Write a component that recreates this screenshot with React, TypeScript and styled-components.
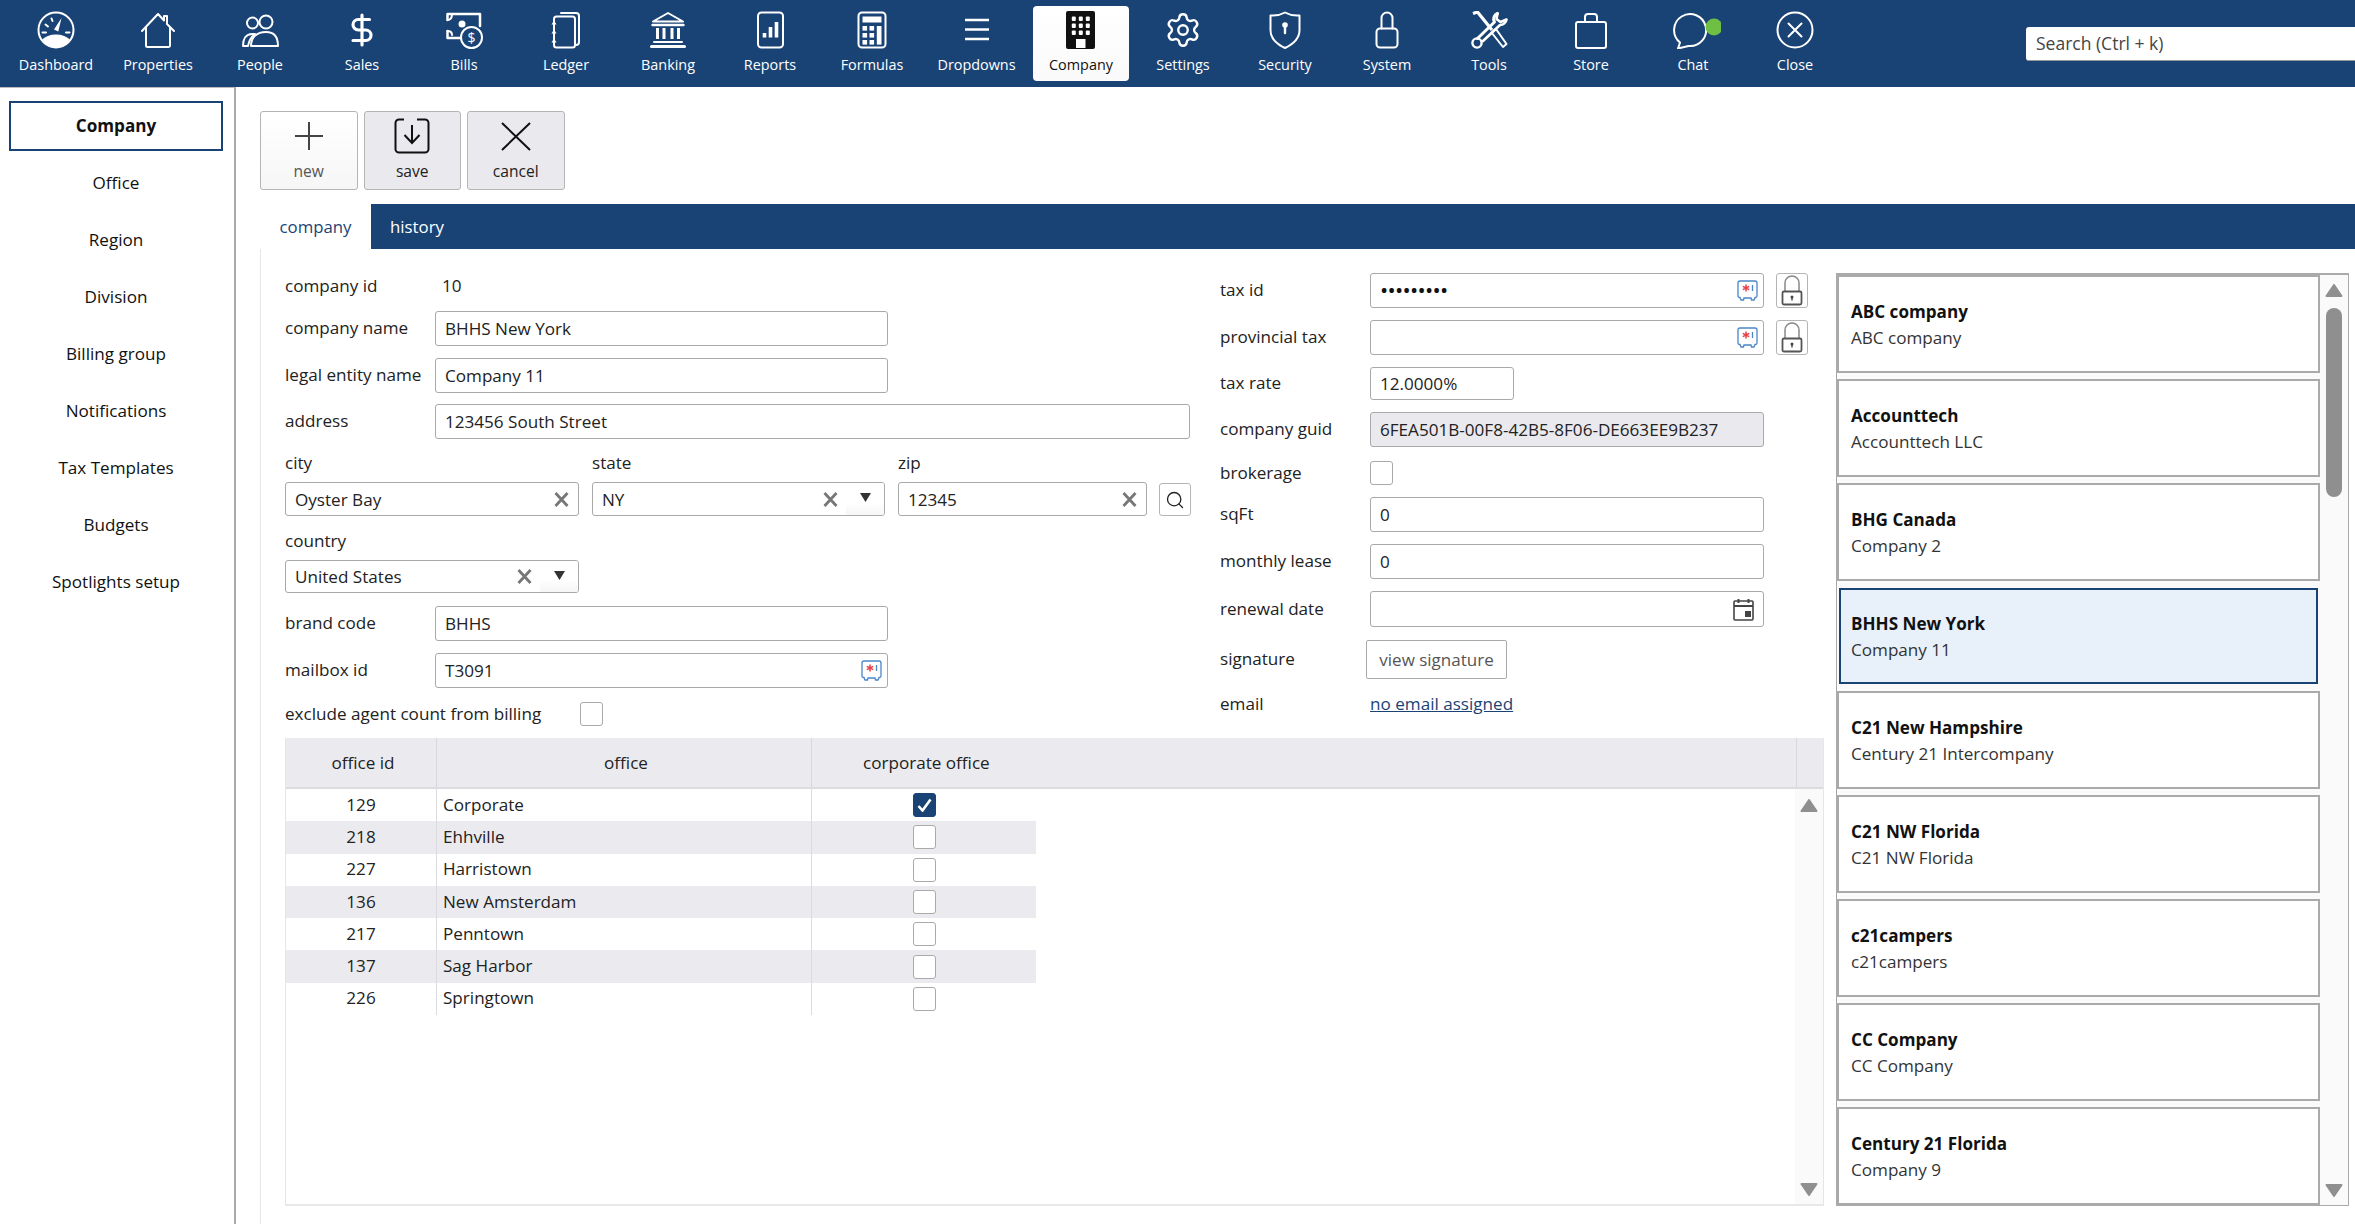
import React from "react";
import styled, { createGlobalStyle } from "styled-components";
import { DollarSign, Settings as Gear, Search as SearchGlyph } from "lucide-react";

const NAVY = "#1a4375";
const FONT = `"Open Sans", "Noto Sans", "Liberation Sans", sans-serif`;
const TEXT = "17.1px";

const Global = createGlobalStyle`
  html, body { margin: 0; padding: 0; width: 2355px; height: 1224px; overflow: hidden; background: #fff; }
  body { font-family: ${FONT}; font-size: ${TEXT}; color: #222; }
  * { box-sizing: border-box; }
`;

const Page = styled.div`display: flex; flex-direction: column; width: 2355px; height: 1224px; overflow: hidden;`;

/* ---------- top bar ---------- */
const TopBar = styled.header`display: flex; align-items: flex-start; flex: none; height: 87px; padding-left: 5px; background: ${NAVY};`;
const NavItem = styled.div<{ $active?: boolean; $wide?: boolean }>`
  display: flex; flex-direction: column; align-items: center; flex: none;
  width: ${(p) => (p.$wide ? 101 : 96)}px; height: 75px; margin: 6px 3px; padding-top: 5px; border-radius: 4px;
  background: ${(p) => (p.$active ? "linear-gradient(#fff, #fafafa)" : "transparent")};
  color: ${(p) => (p.$active ? "#111" : "#fff")};
`;
const NavIcon = styled.div`display: flex; align-items: center; justify-content: center; height: 38px; width: 60px;`;
const NavLabel = styled.div`margin-top: 6px; font-size: 14.4px; line-height: 20px; white-space: nowrap;`;
const SearchBox = styled.div`
  flex: none; width: 420px; height: 34px; margin: 27px 0 0 180px; padding: 0 0 1px 10px; display: flex; align-items: center;
  background: #fff; border-radius: 3px 0 0 3px; border-bottom: 1px solid #999; font-size: 17.5px; color: #444;
`;

/* ---------- shell ---------- */
const Shell = styled.div`display: flex; flex: 1; min-height: 0;`;
const SideBar = styled.nav`flex: none; width: 236px; padding-top: 13px; border-right: 2px solid #aaa; border-top: 1px solid #bbb;`;
const SideItem = styled.div<{ $active?: boolean }>`
  display: flex; align-items: center; justify-content: center; height: 50px; margin: 0 11px 7px 9px; padding-bottom: 2px; font-size: ${TEXT};
  font-weight: ${(p) => (p.$active ? 700 : 400)}; color: #111;
  border: ${(p) => (p.$active ? `2px solid ${NAVY}` : "none")};
`;
const Main = styled.main`flex: 1; min-width: 0; padding-left: 24px; display: flex; flex-direction: column;`;

/* ---------- toolbar ---------- */
const Toolbar = styled.div`display: flex; gap: 6px; flex: none; height: 79px; margin-top: 24px;`;
const ToolButton = styled.div<{ $light?: boolean }>`
  display: flex; flex-direction: column; align-items: center; width: 97.5px; height: 79px; padding-top: 6px;
  border: 1px solid #b5b5b5; border-radius: 3px; background: ${(p) => (p.$light ? "linear-gradient(#fff, #f6f6f6)" : "#e9e9ee")};
  color: ${(p) => (p.$light ? "#555" : "#222")};
`;
const ToolLabel = styled.div`margin-top: 6px; font-size: 15.6px; line-height: 22px;`;

/* ---------- tabs ---------- */
const TabBar = styled.div`display: flex; flex: none; height: 45px; margin-top: 14px; background: ${NAVY};`;
const Tab = styled.div<{ $active?: boolean }>`
  display: flex; align-items: center; justify-content: center; width: ${(p) => (p.$active ? 111 : 92)}px; font-size: 16.8px;
  background: ${(p) => (p.$active ? "#fff" : "transparent")}; color: ${(p) => (p.$active ? NAVY : "#fff")};
`;

/* ---------- workspace ---------- */
const Workspace = styled.div`display: flex; flex: 1; min-height: 0; padding-left: 24px; border-left: 1px solid #e6e6e6;`;
const LeftStack = styled.div`flex: none; width: 1539px; display: flex; flex-direction: column;`;
const Columns = styled.div`display: flex; flex: none; height: 489px; gap: 30px;`;
const FormColumn = styled.div<{ $w: number; $top: number }>`flex: none; width: ${(p) => p.$w}px; padding-top: ${(p) => p.$top}px; display: flex; flex-direction: column;`;
const Row = styled.div<{ $h?: number; $mb?: number }>`display: flex; align-items: center; flex: none; height: ${(p) => p.$h ?? 35}px; margin-bottom: ${(p) => p.$mb ?? 12}px;`;
const Label = styled.div`flex: none; width: 150px; padding-bottom: 2px; font-size: ${TEXT}; white-space: nowrap;`;
const Value = styled.div`padding: 0 0 2px 7px; font-size: ${TEXT};`;
const StackRow = styled.div<{ $mb: number }>`display: flex; align-items: flex-end; flex: none; margin-bottom: ${(p) => p.$mb}px;`;
const Stack = styled.div<{ $w: number; $mr?: number }>`flex: none; width: ${(p) => p.$w}px; margin-right: ${(p) => p.$mr ?? 0}px;`;
const StackLabel = styled.div<{ $mb?: number }>`height: 24px; line-height: 22px; margin-bottom: ${(p) => p.$mb ?? 6}px; font-size: ${TEXT};`;
const Field = styled.div<{ $w?: number; $h?: number; $grey?: boolean }>`
  display: flex; align-items: center; flex: none; width: ${(p) => (p.$w ? `${p.$w}px` : "100%")}; height: ${(p) => p.$h ?? 35}px; padding-left: 9px;
  border: 1px solid #a9a9a9; border-radius: 3px; background: ${(p) => (p.$grey ? "#e9e9ee" : "#fff")}; font-size: ${TEXT}; color: #222; white-space: nowrap; overflow: hidden;
`;
const FieldText = styled.div`flex: 1; min-width: 0;`;
const Dots = styled.div`flex: 1; font-size: 16.5px; letter-spacing: 1.3px; color: #111; line-height: 1; font-weight: 700; padding-left: 1px;`;
const Clear = styled.div<{ $mr: number }>`display: flex; flex: none; margin-right: ${(p) => p.$mr}px;`;
const Caret = styled.div`display: flex; align-items: center; justify-content: center; flex: none; align-self: stretch; width: 38px; padding-bottom: 3px; background: linear-gradient(#fff 60%, #f6f6f6);`;
const EndIcon = styled.div<{ $mr: number }>`display: flex; flex: none; margin-right: ${(p) => p.$mr}px;`;
const SmallButton = styled.div`display: flex; align-items: center; justify-content: center; flex: none; width: 32px; height: 33px; border: 1px solid #b5b5b5; border-radius: 3px; background: #fff; color: #222;`;
const LockButton = styled.div`display: flex; align-items: center; justify-content: center; flex: none; width: 32px; height: 35px; margin-left: 12px; border: 1px solid #b5b5b5; border-radius: 3px; background: #fff;`;
const Check = styled.div<{ $on?: boolean; $ml?: number }>`
  display: flex; align-items: center; justify-content: center; flex: none; width: 23px; height: 24px; margin-left: ${(p) => p.$ml ?? 0}px; border-radius: 3px;
  border: 1px solid ${(p) => (p.$on ? NAVY : "#aaa")}; background: ${(p) => (p.$on ? NAVY : "#fff")};
`;
const ViewButton = styled.div`display: flex; align-items: center; justify-content: center; margin-left: -4px; width: 141px; height: 39px; border: 1px solid #aaa; border-radius: 2px; color: #555; font-size: 17px;`;
const EmailLink = styled.a`padding-bottom: 2px; color: ${NAVY}; text-decoration: underline; font-size: ${TEXT};`;

/* ---------- office grid ---------- */
const Grid = styled.section`flex: none; height: 468px; display: flex; flex-direction: column; border-left: 1px solid #e6e6e6; border-bottom: 2px solid #e8e8e8; border-right: 1px solid #e6e6e6;`;
const GridHead = styled.div`display: flex; flex: none; height: 51px; background: #ebebef; border-bottom: 2px solid #dcdce0;`;
const HeadCell = styled.div<{ $w?: number }>`
  display: flex; align-items: center; justify-content: center; width: ${(p) => (p.$w ? `${p.$w}px` : "auto")}; flex: ${(p) => (p.$w ? "none" : 1)}; padding: 0 0 1px 4px; font-size: ${TEXT};
  border-right: 1px solid #d8d8dc; color: #222;
  &:last-child { border-right: none; }
`;
const HeadWide = styled(HeadCell)`justify-content: flex-start; padding-left: 51px;`;
const GridBody = styled.div`display: flex; flex: 1; min-height: 0; justify-content: space-between;`;
const GridRows = styled.div`flex: none; width: 750px;`;
const GridRow = styled.div<{ $alt: boolean }>`display: flex; height: 32.3px; background: ${(p) => (p.$alt ? "#ebebef" : "#fff")};`;
const Cell = styled.div<{ $w: number; $left?: boolean; $line?: boolean }>`
  display: flex; align-items: center; flex: none; width: ${(p) => p.$w}px; font-size: ${TEXT}; padding-bottom: 2px;
  justify-content: ${(p) => (p.$left ? "flex-start" : "center")}; padding-left: ${(p) => (p.$left ? 6 : 0)}px;
  border-right: ${(p) => (p.$line ? "1px solid #dcdce0" : "none")};
`;
const CheckCell = styled(Cell)`padding-bottom: 0;`;
const ScrollRail = styled.div`flex: none; width: 28px; display: flex; flex-direction: column; align-items: center; justify-content: space-between; padding: 10px 0 8px; background: #fafafa;`;

/* ---------- company list ---------- */
const ListPanel = styled.aside`flex: none; width: 513px; height: 933px; margin: 24px 0 0 12px; display: flex; border: 1px solid #aaa; border-top-width: 2px; background: #fafafa;`;
const Cards = styled.div`flex: none; width: 483px; overflow: hidden; display: flex; flex-direction: column;`;
const Card = styled.div<{ $sel?: boolean }>`
  flex: none; display: flex; flex-direction: column; justify-content: center; height: ${(p) => (p.$sel ? 96 : 98)}px;
  margin: ${(p) => (p.$sel ? "1px 2px 7px" : "0 0 6px")}; padding: 1px 0 0 ${(p) => (p.$sel ? 10 : 12)}px;
  border: ${(p) => (p.$sel ? `2px solid ${NAVY}` : "2px solid #aaa")}; background: ${(p) => (p.$sel ? "#e8f0fa" : "#fff")};
`;
const CardName = styled.div`font-size: ${TEXT}; font-weight: 700; line-height: 26px; color: #111;`;
const CardSub = styled.div`font-size: ${TEXT}; line-height: 26px; color: #333;`;
const ListRail = styled.div`position: relative; flex: 1; display: flex; flex-direction: column; align-items: center; justify-content: space-between; padding: 9px 0 8px;`;
const Thumb = styled.div`position: absolute; top: 33px; left: 6px; width: 16px; height: 189px; border-radius: 8px; background: #8f8f8f;`;

/* ---------- icons ---------- */
const S = { fill: "none", stroke: "currentColor", strokeWidth: 2, strokeLinecap: "round", strokeLinejoin: "round" } as const;

const Ico: React.FC<{ children: React.ReactNode; w?: number }> = ({ children, w = 38 }) => (
  <svg width={w} height={38} viewBox={`0 0 ${w} 38`} {...S}>{children}</svg>
);
const icons: Record<string, React.ReactNode> = {
  Dashboard: (<Ico><circle cx="19" cy="19" r="17.5" /><path d="M4.6 29C8 25.5 13 23.5 19 23.5S30 25.5 33.4 29C30 33.6 25 36 19 36S8 33.6 4.6 29Z" fill="currentColor" stroke="none" /><path d="M17 18.5 24.5 7 21.3 20.5Z" fill="currentColor" stroke="none" /><path d="M8.5 13.5l2.5 2M14.5 7.5l1 2.5M5.5 21.5H9M32.5 21.5H29" /></Ico>),
  Properties: (<Ico><path d="M3 20 19 3l6 6.5V5h3v8l7 7" /><path d="M7 17v17.5a1.5 1.5 0 0 0 1.5 1.5h21a1.5 1.5 0 0 0 1.5-1.5V17" /></Ico>),
  People: (<Ico><circle cx="11.5" cy="12" r="5.5" /><circle cx="25" cy="11" r="6.5" /><path d="M10 35c0-9 6-14 15-14s12 6 12 14Z" /><path d="M7 35H2c0-7 3-12 9-12h3c-4 3-6 7-7 12Z" /></Ico>),
  Sales: <DollarSign size={36} strokeWidth={2.1} />,
  Bills: (<Ico><path d="M17 27H2.5V20M2.5 9V3H35v12" strokeWidth={2.5} /><path d="M2.5 9c3 0 4.5-2 4.5-6M2.5 20c3 0 4.5 1.5 4.5 4" /><circle cx="17" cy="13" r="3.5" fill="currentColor" stroke="none" /><circle cx="26.5" cy="26.5" r="10.5" fill={NAVY} /><text x="26.5" y="31.5" textAnchor="middle" fontSize="14" fill="currentColor" stroke="none" fontFamily={FONT}>$</text></Ico>),
  Ledger: (<Ico><path d="M14 2h15a3 3 0 0 1 3 3v26a3 3 0 0 1-3 3" /><rect x="7" y="5.5" width="21" height="31" rx="2.5" fill={NAVY} /><path d="M4.5 13.5h5L7 9.5ZM4.5 22.5h5l-2.5-4ZM4.5 31.5h5l-2.5-4Z" fill="currentColor" stroke="none" /></Ico>),
  Banking: (<Ico><path d="M19 2 34 10.5H4Z" /><path d="M3.5 14h31" strokeWidth={2.4} /><path d="M8.5 17v11M15 17v11M23 17v11M29.5 17v11" strokeWidth={3} strokeLinecap="butt" /><path d="M5 31h28" strokeWidth={2} /><path d="M2.5 35.5h33" strokeWidth={3} /></Ico>),
  Reports: (<Ico><rect x="7" y="1.5" width="25" height="35" rx="3.5" /><path d="M13.5 26.5V22M19.5 26.5V16M25.5 26.5V11" strokeWidth={3.6} strokeLinecap="butt" /></Ico>),
  Formulas: (<Ico><rect x="5.5" y="1.5" width="27" height="35" rx="3.5" /><rect x="9.5" y="5.5" width="19" height="6" fill="currentColor" stroke="none" />{[0, 1, 2].flatMap((r) => [0, 1].map((c) => <rect key={`${r}${c}`} x={9.5 + c * 7} y={15 + r * 7} width="4.6" height="4.6" fill="currentColor" stroke="none" />))}<rect x="23.8" y="15" width="4.7" height="18.6" fill="currentColor" stroke="none" /></Ico>),
  Dropdowns: (<Ico><path d="M7 9h24M7 18.5h24M7 28h24" strokeWidth={2.4} strokeLinecap="butt" /></Ico>),
  Company: (<Ico><rect x="5" y="1" width="27" height="36" rx="1" fill="currentColor" />{[0, 1, 2].flatMap((r) => [0, 1, 2].map((c) => <rect key={`${r}${c}`} x={9.8 + c * 7} y={5.5 + r * 7} width="4" height="4.6" rx="1" fill="#fff" stroke="none" />))}<rect x="14" y="28" width="9.5" height="9" fill="#fff" stroke="none" /></Ico>),
  Settings: <Gear size={38} strokeWidth={1.5} />,
  Security: (<Ico><path d="M19 1.5c4.5 2.5 9 3.5 14.5 3V19c0 8-6 14-14.5 18C10.500 33 4.500 27 4.500 19V4.500C10 5 14.500 4 19 1.500Z" /><circle cx="19" cy="14" r="2.800" fill="currentColor" stroke="none" /><path d="M19 15v7" strokeWidth={2.400} /></Ico>),
  System: (<Ico><rect x="8.500" y="17.500" width="21" height="19" rx="3.500" /><path d="M13.500 17.500V7a5.500 5.500 0 0 1 11 0v10.500" /></Ico>),
  Tools: (<Ico><path d="M3 2.500 7.500 1 22 19" strokeWidth={3.200} strokeLinecap="butt" /><path d="M21.500 21.500 33 36l3.500-3L26 18Z" strokeWidth={2} /><path d="M27.500 2.500c-3.500 1.500-5 5.500-3 8.500L7.500 27.500" strokeWidth={3} /><path d="M27.500 2.500 26.500 8l4 3 6-2.500c-.5 3-3 5.500-6.500 5.500l-17 16" strokeWidth={2.600} /><circle cx="7" cy="32" r="4.600" strokeWidth={2.400} /></Ico>),
  Store: (<Ico><rect x="4" y="11" width="30" height="26" rx="2" /><path d="M13 11V6a3 3 0 0 1 3-3h6a3 3 0 0 1 3 3v5" /></Ico>),
  Chat: (<Ico w={56}><path d="M15 31.500A16 16 0 1 1 23.500 35L13 37.500Z" /><circle cx="49" cy="16" r="8.500" fill="#6fbf44" stroke="none" /></Ico>),
  Close: (<Ico><circle cx="19" cy="19" r="17.500" /><path d="M12.500 12.500 25.500 25.500M25.500 12.500 12.500 25.500" /></Ico>),
};

const NAV = ["Dashboard", "Properties", "People", "Sales", "Bills", "Ledger", "Banking", "Reports", "Formulas", "Dropdowns", "Company", "Settings", "Security", "System", "Tools", "Store", "Chat", "Close"];
const SIDE = ["Company", "Office", "Region", "Division", "Billing group", "Notifications", "Tax Templates", "Budgets", "Spotlights setup"];
const OFFICES: [string, string][] = [["129", "Corporate"], ["218", "Ehhville"], ["227", "Harristown"], ["136", "New Amsterdam"], ["217", "Penntown"], ["137", "Sag Harbor"], ["226", "Springtown"]];
const COMPANIES: [string, string][] = [["ABC company", "ABC company"], ["Accounttech", "Accounttech LLC"], ["BHG Canada", "Company 2"], ["BHHS New York", "Company 11"], ["C21 New Hampshire", "Century 21 Intercompany"], ["C21 NW Florida", "C21 NW Florida"], ["c21campers", "c21campers"], ["CC Company", "CC Company"], ["Century 21 Florida", "Company 9"]];

const ClearX = ({ mr }: { mr: number }) => (
  <Clear $mr={mr}><svg width="15" height="15" viewBox="0 0 15 15"><path d="M1.500 1 13.500 14M13.500 1 1.500 14" stroke="#777" strokeWidth="2.800" fill="none" /></svg></Clear>
);
const DownCaret = () => (
  <Caret><svg width="11" height="9" viewBox="0 0 11 9"><path d="M0 0h11L5.500 9Z" fill="#333" /></svg></Caret>
);
const VaultIcon = ({ mr }: { mr: number }) => (
  <EndIcon $mr={mr}><svg width="21" height="21" viewBox="0 0 21 21" fill="none"><path d="M3 1h15a2 2 0 0 1 2 2v13a1.500 1.500 0 0 1-1.500 1.500H18L17 20H14.500L14 18H7L6.500 20H4L3 17.500H2.500A1.500 1.500 0 0 1 1 16V3a2 2 0 0 1 2-2Z" stroke="#4a86c8" strokeWidth="1.300" /><path d="M9 4.500v7M5.800 6.300l6.400 3.400M12.200 6.300 5.800 9.700" stroke="#e8404a" strokeWidth="1.500" /><path d="M15.500 5v6" stroke="#4a86c8" strokeWidth="1.300" /></svg></EndIcon>
);
const LockIcon = () => (
  <svg width="24" height="31" viewBox="0 0 24 31" fill="none"><path d="M5 17V8a7 7 0 0 1 14 0v9" stroke="#888" strokeWidth="1.500" /><rect x="2.500" y="16.500" width="19" height="13" rx="1.500" stroke="#555" strokeWidth="1.800" /><circle cx="12" cy="22" r="1.500" fill="#444" /><path d="M12 22v3.500" stroke="#444" strokeWidth="1.400" /></svg>
);
const CalendarIcon = () => (
  <EndIcon $mr={9}><svg width="21" height="23" viewBox="0 0 21 23" fill="none"><rect x="1" y="3" width="19" height="19" rx="1" stroke="#444" strokeWidth="1.600" /><path d="M1 8h19" stroke="#444" strokeWidth="2" /><path d="M5.500 1v4M15.500 1v4" stroke="#444" strokeWidth="2" /><rect x="12" y="13" width="6" height="6" fill="#444" /></svg></EndIcon>
);
const Tick = () => (
  <svg width="15" height="14" viewBox="0 0 15 14" fill="none"><path d="M1.500 8 5.500 12.500 13.500 1.500" stroke="#fff" strokeWidth="2.600" /></svg>
);
const Arrow = ({ down }: { down?: boolean }) => (
  <svg width="18" height="13" viewBox="0 0 18 13"><path d={down ? "M1.500 1h15L9 12Z" : "M1.500 12h15L9 1Z"} fill="#8f8f8f" stroke="#8f8f8f" strokeWidth="2" strokeLinejoin="round" /></svg>
);

export default function App() {
  return (
    <Page>
      <Global />
      <TopBar>
        {NAV.map((n) => (
          <NavItem key={n} $active={n === "Company"} $wide={n === "Dropdowns"}>
            <NavIcon>{icons[n]}</NavIcon>
            <NavLabel>{n}</NavLabel>
          </NavItem>
        ))}
        <SearchBox>Search (Ctrl + k)</SearchBox>
      </TopBar>
      <Shell>
        <SideBar>
          {SIDE.map((s, i) => <SideItem key={s} $active={i === 0}>{s}</SideItem>)}
        </SideBar>
        <Main>
          <Toolbar>
            <ToolButton $light>
              <svg width="36" height="36" viewBox="0 0 36 36" fill="none"><path d="M18 4v28M4 18h28" stroke="#444" strokeWidth="2" /></svg>
              <ToolLabel>new</ToolLabel>
            </ToolButton>
            <ToolButton>
              <svg width="36" height="36" viewBox="0 0 36 36" fill="none"><path d="M10 1.500H5A3.500 3.500 0 0 0 1.500 5v26A3.500 3.500 0 0 0 5 34.500h26a3.500 3.500 0 0 0 3.500-3.500V5A3.500 3.500 0 0 0 31 1.500h-8" stroke="#111" strokeWidth="2" /><path d="M18 7v17M10.500 17l7.500 8 7.500-8" stroke="#111" strokeWidth="2" /></svg>
              <ToolLabel>save</ToolLabel>
            </ToolButton>
            <ToolButton>
              <svg width="36" height="36" viewBox="0 0 36 36" fill="none"><path d="M4 5 32 32M32 5 4 32" stroke="#111" strokeWidth="2" /></svg>
              <ToolLabel>cancel</ToolLabel>
            </ToolButton>
          </Toolbar>
          <TabBar>
            <Tab $active>company</Tab>
            <Tab>history</Tab>
          </TabBar>
          <Workspace>
            <LeftStack>
              <Columns>
                <FormColumn $w={905} $top={20}>
                  <Row $mb={7}><Label>company id</Label><Value>10</Value></Row>
                  <Row><Label>company name</Label><Field $w={453}>BHHS New York</Field></Row>
                  <Row $mb={11}><Label>legal entity name</Label><Field $w={453}>Company 11</Field></Row>
                  <Row $mb={13}><Label>address</Label><Field $w={755}>123456 South Street</Field></Row>
                  <StackRow $mb={14}>
                    <Stack $w={294} $mr={13}><StackLabel>city</StackLabel><Field $h={34}><FieldText>Oyster Bay</FieldText><ClearX mr={9} /></Field></Stack>
                    <Stack $w={293} $mr={13}><StackLabel>state</StackLabel><Field $h={34}><FieldText>NY</FieldText><ClearX mr={8} /><DownCaret /></Field></Stack>
                    <Stack $w={249} $mr={12}><StackLabel>zip</StackLabel><Field $h={34}><FieldText>12345</FieldText><ClearX mr={9} /></Field></Stack>
                    <SmallButton><SearchGlyph size={20} strokeWidth={1.6} /></SmallButton>
                  </StackRow>
                  <StackRow $mb={13}>
                    <Stack $w={294}><StackLabel>country</StackLabel><Field $h={33}><FieldText>United States</FieldText><ClearX mr={8} /><DownCaret /></Field></Stack>
                  </StackRow>
                  <Row $mb={12}><Label>brand code</Label><Field $w={453}>BHHS</Field></Row>
                  <Row $mb={14}><Label>mailbox id</Label><Field $w={453}><FieldText>T3091</FieldText><VaultIcon mr={5} /></Field></Row>
                  <Row $h={24} $mb={0}><Label>exclude agent count from billing</Label><Check $ml={145} /></Row>
                </FormColumn>
                <FormColumn $w={604} $top={24}>
                  <Row><Label>tax id</Label><Field $w={394}><Dots>•••••••••</Dots><VaultIcon mr={5} /></Field><LockButton><LockIcon /></LockButton></Row>
                  <Row><Label>provincial tax</Label><Field $w={394}><FieldText /><VaultIcon mr={5} /></Field><LockButton><LockIcon /></LockButton></Row>
                  <Row $h={33}><Label>tax rate</Label><Field $w={144} $h={33}>12.0000%</Field></Row>
                  <Row $mb={14}><Label>company guid</Label><Field $w={394} $grey>6FEA501B-00F8-42B5-8F06-DE663EE9B237</Field></Row>
                  <Row $h={24}><Label>brokerage</Label><Check /></Row>
                  <Row><Label>sqFt</Label><Field $w={394}>0</Field></Row>
                  <Row><Label>monthly lease</Label><Field $w={394}>0</Field></Row>
                  <Row $h={36} $mb={13}><Label>renewal date</Label><Field $w={394} $h={36}><FieldText /><CalendarIcon /></Field></Row>
                  <Row $h={39} $mb={13}><Label>signature</Label><ViewButton>view signature</ViewButton></Row>
                  <Row $h={24} $mb={0}><Label>email</Label><EmailLink href="#">no email assigned</EmailLink></Row>
                </FormColumn>
              </Columns>
              <Grid>
                <GridHead>
                  <HeadCell $w={151}>office id</HeadCell>
                  <HeadCell $w={375}>office</HeadCell>
                  <HeadWide $w={985}>corporate office</HeadWide>
                  <HeadCell />
                </GridHead>
                <GridBody>
                  <GridRows>
                    {OFFICES.map(([id, name], i) => (
                      <GridRow key={id} $alt={i % 2 === 1}>
                        <Cell $w={151} $line>{id}</Cell>
                        <Cell $w={375} $left $line>{name}</Cell>
                        <CheckCell $w={224}><Check $on={i === 0}>{i === 0 && <Tick />}</Check></CheckCell>
                      </GridRow>
                    ))}
                  </GridRows>
                  <ScrollRail><Arrow /><Arrow down /></ScrollRail>
                </GridBody>
              </Grid>
            </LeftStack>
            <ListPanel>
              <Cards>
                {COMPANIES.map(([a, b]) => (
                  <Card key={a} $sel={a === "BHHS New York"}>
                    <CardName>{a}</CardName>
                    <CardSub>{b}</CardSub>
                  </Card>
                ))}
              </Cards>
              <ListRail>
                <Arrow />
                <Thumb />
                <Arrow down />
              </ListRail>
            </ListPanel>
          </Workspace>
        </Main>
      </Shell>
    </Page>
  );
}
